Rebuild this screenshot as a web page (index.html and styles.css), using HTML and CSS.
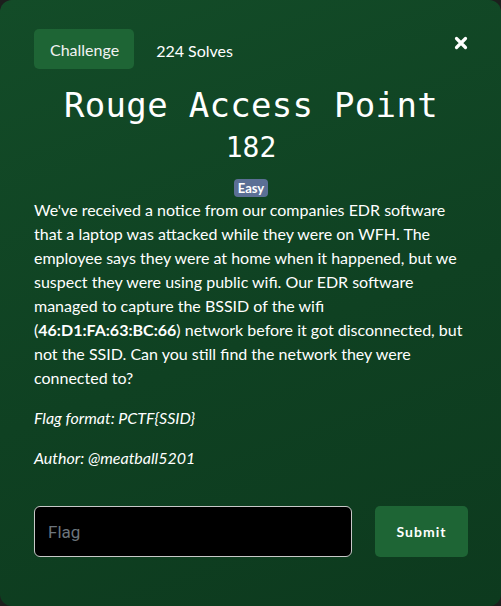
FILE: index.html
```html
<!DOCTYPE html>
<html lang="en">
<head>
<meta charset="utf-8">
<title>Rouge Access Point</title>
<link rel="stylesheet" href="styles.css">
</head>
<body>
<div class="modal">
  <div class="header">
    <span class="tab">Challenge</span>
    <span class="solves">224 Solves</span>
    <span class="close" aria-label="Close">
      <svg width="14" height="14" viewBox="0 0 14 14"><path d="M2.5 2.5 L11.5 11.5 M11.5 2.5 L2.5 11.5" stroke="#fff" stroke-width="3.2" stroke-linecap="round"/></svg>
    </span>
  </div>
  <h1 class="title">Rouge Access Point</h1>
  <div class="points">182</div>
  <div class="badge-row"><span class="badge">Easy</span></div>
  <div class="desc">
    <p>We've received a notice from our companies EDR software that a laptop was attacked while they were on WFH. The employee says they were at home when it happened, but we suspect they were using public wifi. Our EDR software managed to capture the BSSID of the wifi (<strong>46:D1:FA:63:BC:66</strong>) network before it got disconnected, but not the SSID. Can you still find the network they were connected to?</p>
    <p><em>Flag format: PCTF{SSID}</em></p>
    <p><em>Author: @meatball5201</em></p>
  </div>
  <form class="submit-row">
    <input class="flag-input" type="text" placeholder="Flag">
    <button class="submit-btn" type="button">Submit</button>
  </form>
</div>
</body>
</html>
```
FILE: styles.css
```css
html, body {
  margin: 0;
  padding: 0;
  background: #1c1f1d;
}
body {
  width: 501px;
  height: 606px;
  overflow: hidden;
}
.modal {
  box-sizing: border-box;
  width: 501px;
  height: 606px;
  border-radius: 12px;
  background: linear-gradient(160deg, #134c28 0%, #0f4122 55%, #0d3a1e 100%);
  padding: 29px 33px 0 34px;
  color: #fff;
  font-family: Lato, "Noto Sans", sans-serif;
}
.header {
  display: flex;
  align-items: center;
  height: 40px;
}
.tab {
  display: flex;
  align-items: center;
  height: 40px;
  padding: 0 15px 0 16px;
  background: #1e6535;
  border-radius: 5px;
  font-size: 16px;
  color: #f2f2f2;
  box-sizing: border-box;
}
.solves {
  margin-left: 22px;
  font-size: 16px;
  padding-top: 2px;
}
.close {
  margin-left: auto;
  display: flex;
  align-items: center;
  margin-top: -13px;
}
.title {
  margin: 16px 0 0;
  font-family: "DejaVu Sans Mono", monospace;
  font-weight: normal;
  font-size: 34px;
  line-height: 40px;
  text-align: center;
  letter-spacing: 0.3px;
}
.points {
  margin-top: 6px;
  font-family: "DejaVu Sans Mono", monospace;
  font-size: 28px;
  line-height: 34px;
  text-align: center;
}
.badge-row {
  display: flex;
  justify-content: center;
  margin-top: 14px;
}
.badge {
  display: inline-flex;
  align-items: center;
  height: 18px;
  padding: 0 4px;
  background: #5b6f95;
  border-radius: 4px;
  font-size: 13px;
  font-weight: bold;
  color: #fff;
}
.desc {
  margin-top: 1px;
  font-size: 16px;
  line-height: 24px;
}
.desc p {
  margin: 0 0 16px;
}
.desc strong {
  font-weight: bold;
}
.submit-row {
  display: flex;
  gap: 23px;
  margin-top: 36px;
}
.flag-input {
  box-sizing: border-box;
  width: 318px;
  height: 51px;
  background: #000;
  border: 1px solid #c8c8c8;
  border-radius: 6px;
  padding: 0 13px;
  color: #fff;
  font-family: Roboto, "Liberation Sans", sans-serif;
  font-size: 17px;
  outline: none;
}
.flag-input::placeholder {
  color: #6c757d;
}
.submit-btn {
  width: 93px;
  height: 51px;
  background: #1e6535;
  border: none;
  border-radius: 5px;
  color: #fff;
  font-family: Lato, sans-serif;
  font-weight: bold;
  font-size: 14px;
  letter-spacing: 1px;
  padding: 0;
}
```
